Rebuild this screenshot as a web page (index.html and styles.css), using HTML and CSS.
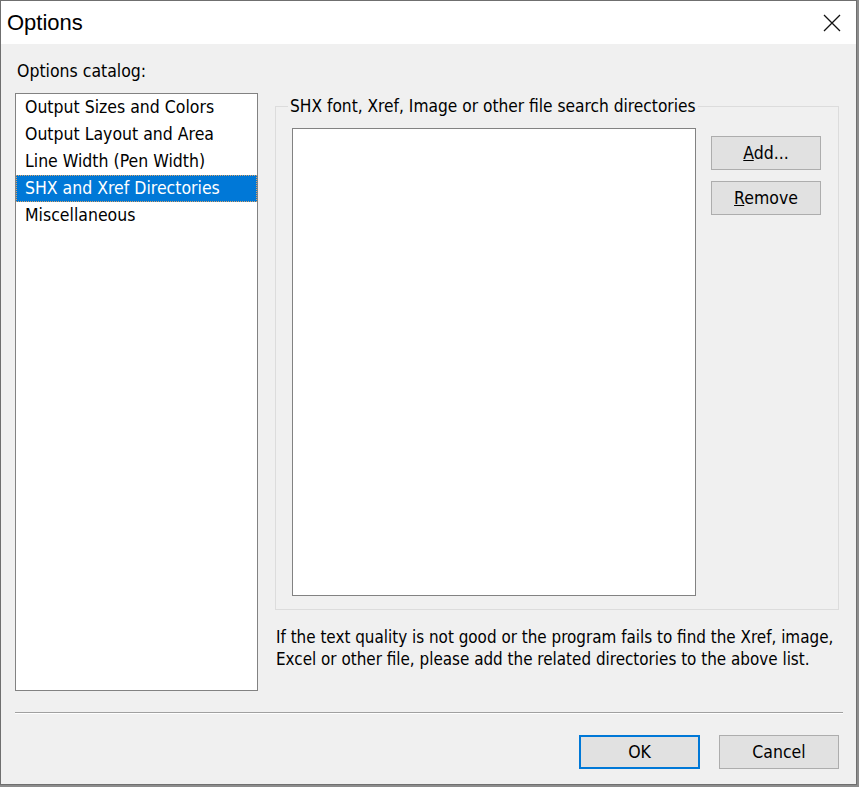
FILE: index.html
```html
<!DOCTYPE html>
<html lang="en">

<head>
    <meta charset="UTF-8">
    <title>Options</title>
    <link rel="stylesheet" href="styles.css">
</head>

<body>
    <div class="window">
        <div class="titlebar">
            <span class="title">Options</span>
            <svg class="close" width="18" height="18" viewBox="0 0 18 18">
                <path d="M1 1 L17 17 M17 1 L1 17" stroke="#111" stroke-width="1.3" fill="none" />
            </svg>
        </div>
        <div class="content">
            <div class="catalog-label">Options catalog:</div>
            <div class="main">
                <ul class="catalog">
                    <li>Output Sizes and Colors</li>
                    <li>Output Layout and Area</li>
                    <li>Line Width (Pen Width)</li>
                    <li class="selected">SHX and Xref Directories</li>
                    <li>Miscellaneous</li>
                </ul>
                <div class="panel">
                    <fieldset class="group">
                        <legend>SHX font, Xref, Image or other file search directories</legend>
                        <div class="group-body">
                            <div class="dir-list"></div>
                            <div class="side-buttons">
                                <button class="btn side-btn"><u>A</u>dd...</button>
                                <button class="btn side-btn"><u>R</u>emove</button>
                            </div>
                        </div>
                    </fieldset>
                    <p class="hint">If the text quality is not good or the program fails to find the Xref, image,<br>Excel or other file, please add the related directories to the above list.</p>
                </div>
            </div>
            <div class="separator"></div>
            <div class="footer">
                <button class="btn btn-default">OK</button>
                <button class="btn btn-cancel">Cancel</button>
            </div>
        </div>
    </div>
</body>

</html>
```

FILE: styles.css
```css
body {
    margin: 0;
    padding: 0;
    background-color: #8c8c8c;
    font-family: "DejaVu Sans Condensed", "Liberation Sans", Arial, sans-serif;
    font-size: 17.5px;
    color: #000;
}

.window {
    width: 857px;
    height: 785px;
    box-sizing: border-box;
    border: 1px solid #6f6f6f;
    background-color: #f0f0f0;
}

.titlebar {
    height: 43px;
    background-color: #fff;
    display: flex;
    align-items: center;
    justify-content: space-between;
    padding-left: 6px;
}

.title {
    font-family: "Liberation Sans", Arial, sans-serif;
    font-size: 22px;
}

.close {
    margin-right: 15px;
}

.content {
    padding: 16px 17px 0 14px;
}

.catalog-label {
    line-height: 22px;
    margin-bottom: 11px;
    padding-left: 2px;
}

.main {
    display: flex;
    gap: 17px;
}

.catalog {
    width: 243px;
    height: 598px;
    box-sizing: border-box;
    margin: 0;
    padding: 0;
    list-style: none;
    border: 1px solid #828282;
    background-color: #fff;
}

.catalog li {
    height: 27px;
    line-height: 26px;
    padding-left: 9px;
    white-space: nowrap;
}

.catalog li.selected {
    background-color: #0078d7;
    color: #fff;
    outline: 1px dotted #d9a46a;
    outline-offset: -1px;
}

.panel {
    width: 564px;
}

.group {
    margin: 2px 0 0 0;
    padding: 11px 17px 13px 16px;
    border: 1px solid #dcdcdc;
    min-width: 0;
}

.group legend {
    padding: 0 2px;
    margin-left: -4px;
    font-size: 17.2px;
    line-height: 22px;
    white-space: nowrap;
}

.group-body {
    display: flex;
    gap: 15px;
}

.dir-list {
    width: 404px;
    height: 468px;
    box-sizing: border-box;
    border: 1px solid #828282;
    background-color: #fff;
}

.side-buttons {
    display: flex;
    flex-direction: column;
    gap: 11px;
    padding-top: 8px;
}

.btn {
    font-family: inherit;
    font-size: 17.5px;
    color: #000;
    height: 34px;
    padding: 0;
    background-color: #e1e1e1;
    border: 1px solid #adadad;
    border-radius: 0;
    box-sizing: border-box;
}

.side-btn {
    width: 110px;
}

.hint {
    margin: 16px 0 0 1px;
    font-size: 16.9px;
    line-height: 22px;
    white-space: nowrap;
}

.separator {
    margin: 21px -4px 0 0;
    height: 0;
    border-top: 1px solid #a0a0a0;
    border-bottom: 1px solid #fff;
}

.footer {
    display: flex;
    justify-content: flex-end;
    gap: 19px;
    margin-top: 21px;
}

.btn-default {
    width: 121px;
    border: 2px solid #0078d7;
}

.btn-cancel {
    width: 120px;
}
```
